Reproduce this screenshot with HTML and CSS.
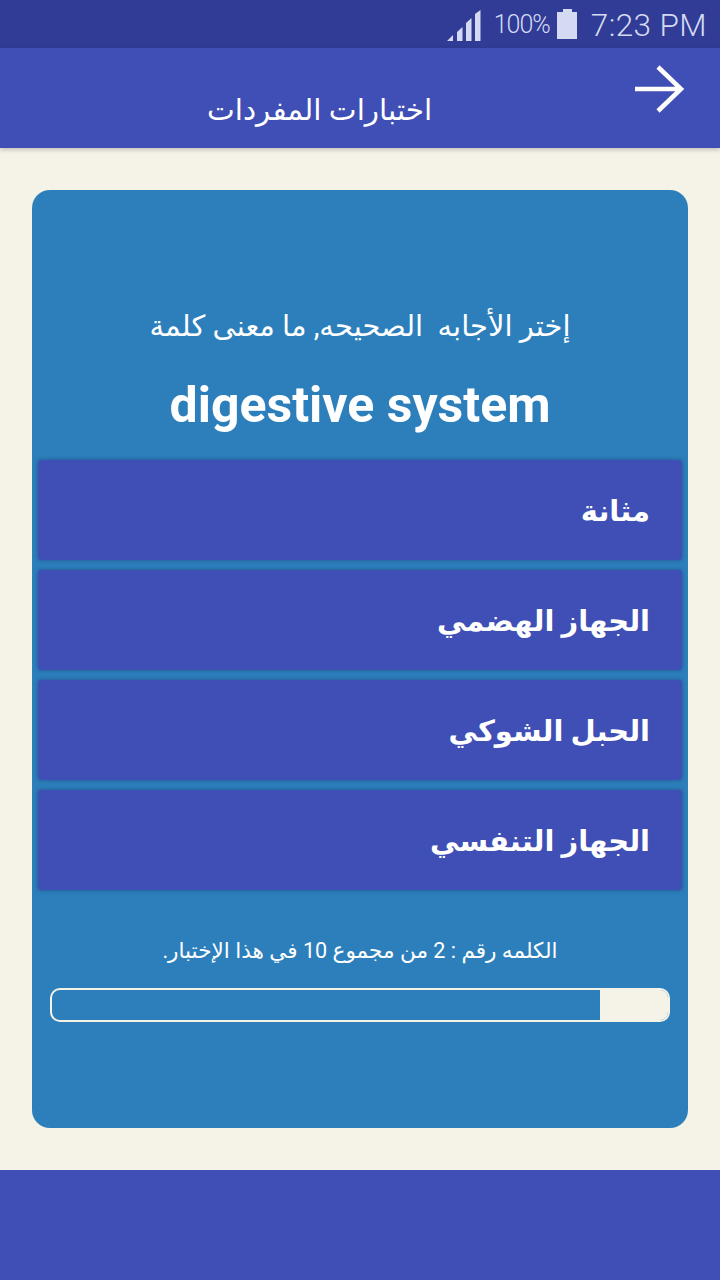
FILE: index.html
```
<!DOCTYPE html>
<html lang="ar">
<head>
<meta charset="utf-8">
<title>اختبارات المفردات</title>
<link rel="stylesheet" href="styles.css">
</head>
<body>
<div class="screen">
  <div class="status">
    <svg class="signal" width="34" height="33" viewBox="0 0 34 33"><path d="M0 32l6-6v6zM10 32V23l5.500-5V32zM19 32V14l5.500-5V32zM28 32V5l5.500-4V32z" fill="#d5daf3"/></svg>
    <span class="pct">100%</span>
    <svg class="battery" width="20" height="30" viewBox="0 0 20 30"><path d="M6 0h9v3h5v27H0V3h6z" fill="#d5daf3"/></svg>
    <span class="clock">7:23 PM</span>
  </div>
  <header class="appbar">
    <h1 class="title">اختبارات المفردات</h1>
    <svg class="back" width="52" height="48" viewBox="0 0 52 48"><path d="M2 24h46M25 2l23 22-23 22" fill="none" stroke="#fff" stroke-width="4.500"/></svg>
  </header>
  <main class="content">
    <section class="card">
      <p class="prompt" dir="rtl">إختر الأجابه&nbsp; الصحيحه, ما معنى كلمة</p>
      <p class="word">digestive system</p>
      <div class="options" dir="rtl">
        <div class="option">مثانة</div>
        <div class="option">الجهاز الهضمي</div>
        <div class="option">الحبل الشوكي</div>
        <div class="option">الجهاز التنفسي</div>
      </div>
      <p class="count" dir="rtl">الكلمه رقم : 2 من مجموع 10 في هذا الإختبار.</p>
      <div class="progress"><div class="remain"></div></div>
    </section>
  </main>
  <footer class="footer"></footer>
</div>
</body>
</html>
```
FILE: styles.css
```
* { box-sizing: border-box; }
html, body { margin: 0; padding: 0; }
body { font-family: "Roboto", "Noto Sans", "DejaVu Sans", sans-serif; }
.screen { width: 720px; height: 1280px; display: flex; flex-direction: column; background: #f5f2e8; overflow: hidden; }
.status { height: 48px; background: #303c95; display: flex; align-items: center; justify-content: flex-end; padding-right: 13px; color: #d5daf3; }
.signal { margin-right: 13px; margin-top: 3px; }
.pct { font-size: 25px; letter-spacing: -1px; margin-right: 7px; font-weight: 300; }
.battery { margin-right: 14px; }
.clock { font-size: 31.500px; font-weight: 300; letter-spacing: .4px; padding-top: 2px; }
.appbar { height: 100px; background: #3f4fb5; display: flex; align-items: flex-start; justify-content: space-between; padding: 17px 35px 0 207px; box-shadow: 0 2px 4px rgba(60,50,60,.25); position: relative; }
.title { margin: 25px 0 0; font-size: 29.500px; line-height: 40px; font-weight: 400; color: #fff; }
.content { flex: 1; padding: 42px 32px; }
.card { height: 938px; background: #2c7fbb; border-radius: 18px; padding: 116px 6px 0; display: flex; flex-direction: column; align-items: stretch; }
.prompt { margin: 0; text-align: center; font-size: 29px; line-height: 40px; color: #fff; }
.word { margin: 29px 0 0; text-align: center; font-size: 50px; line-height: 60px; font-weight: 700; color: #fff; }
.options { margin-top: 25px; display: flex; flex-direction: column; gap: 10px; }
.option { height: 100px; background: #3f4fb5; border-radius: 3px; box-shadow: 0 0 4px rgba(30,50,110,.6); color: #fff; font-size: 29px; font-weight: 700; line-height: 102px; padding-right: 32px; }
.count { margin: 44px 0 0; text-align: center; font-size: 21.600px; line-height: 34px; color: #fff; }
.progress { margin: 20px 12px 0; height: 34px; border: 2px solid #f5f2e8; border-radius: 10px; display: flex; justify-content: flex-end; overflow: hidden; }
.remain { width: 68px; background: #f5f2e8; }
.footer { height: 110px; background: #3f4fb5; }
```
